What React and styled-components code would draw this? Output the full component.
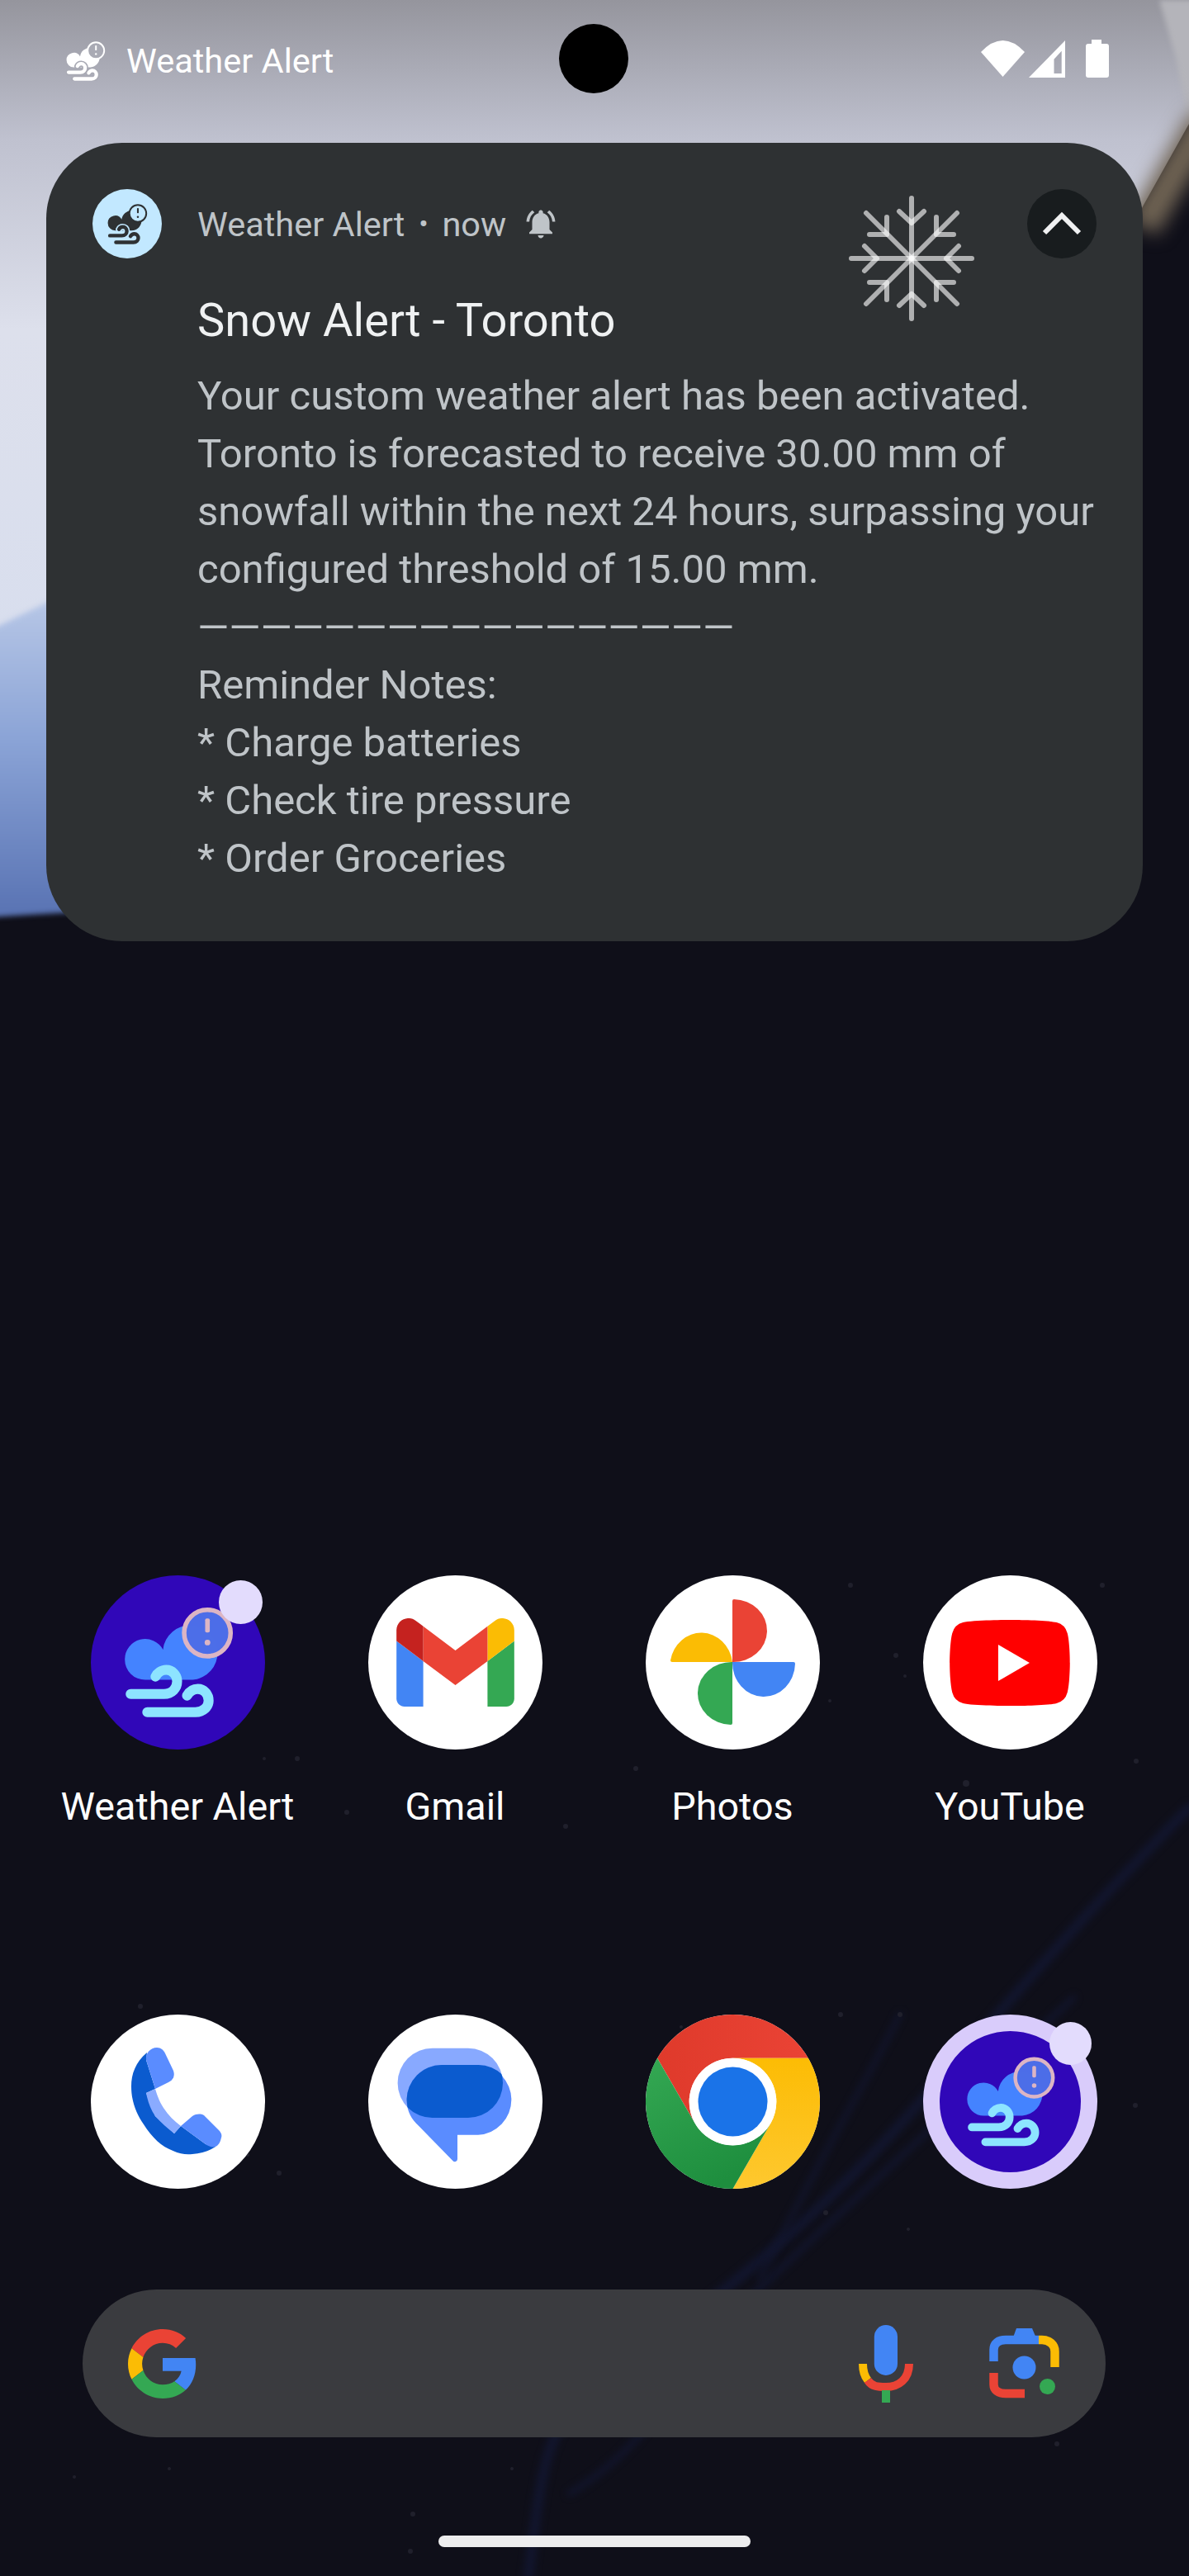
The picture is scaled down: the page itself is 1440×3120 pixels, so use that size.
import React from "react";
import styled, { createGlobalStyle } from "styled-components";

const GlobalStyle = createGlobalStyle`
  html, body {
    margin: 0;
    padding: 0;
    background: #0f0f19;
  }
  body {
    font-family: Roboto, "Noto Sans", sans-serif;
  }
`;

const BODY_LINES = [
  "Your custom weather alert has been activated.",
  "Toronto is forecasted to receive 30.00 mm of",
  "snowfall within the next 24 hours, surpassing your",
  "configured threshold of 15.00 mm.",
  "—————————————————",
  "Reminder Notes:",
  "* Charge batteries",
  "* Check tire pressure",
  "* Order Groceries",
];

const STARS = [
  [1030, 1920, 3], [1085, 2005, 3], [1096, 2030, 2], [1170, 2160, 4], [1376, 2133, 3], [1335, 1920, 3],
  [770, 2142, 3], [920, 2110, 2], [1005, 2060, 2], [360, 2130, 3], [420, 2195, 3], [685, 2212, 3],
  [320, 2130, 2], [170, 2430, 3], [1018, 2440, 3], [1090, 2440, 3], [1320, 2480, 3], [1375, 2550, 3],
  [338, 2632, 3], [300, 2610, 2], [560, 2560, 3], [825, 2455, 2], [1000, 2680, 3], [1100, 2700, 2],
  [1280, 2960, 3], [620, 2990, 2], [500, 3045, 3], [497, 3090, 3], [205, 2990, 2], [90, 3000, 2],
];

function Wallpaper() {
  return (
    <WallpaperArt viewBox="0 0 1440 3120" aria-hidden="true">
      <defs>
        <linearGradient id="sky" x1="0" y1="0" x2="0" y2="800" gradientUnits="userSpaceOnUse">
          <stop offset="0" stopColor="#95959d" />
          <stop offset="0.21" stopColor="#bfc1cf" />
          <stop offset="0.5" stopColor="#dde0ec" />
          <stop offset="1" stopColor="#d8deee" />
        </linearGradient>
        <linearGradient id="ridge" x1="0" y1="730" x2="0" y2="1105" gradientUnits="userSpaceOnUse">
          <stop offset="0" stopColor="#b6c6e6" />
          <stop offset="0.45" stopColor="#8aa3d6" />
          <stop offset="1" stopColor="#5a74b4" />
        </linearGradient>
        <filter id="soft" x="-50%" y="-50%" width="200%" height="200%" colorInterpolationFilters="sRGB">
          <feGaussianBlur stdDeviation="11" />
        </filter>
        <filter id="softer" x="-20%" y="-20%" width="140%" height="140%" colorInterpolationFilters="sRGB">
          <feGaussianBlur stdDeviation="3" />
        </filter>
        <filter id="haze" x="-20%" y="-20%" width="140%" height="140%" colorInterpolationFilters="sRGB">
          <feGaussianBlur stdDeviation="5" />
        </filter>
      </defs>
      <rect width="1440" height="3120" fill="#0f0f19" />
      <path d="M0 0H1440V150L1384 250L1300 420H200V900H0Z" fill="url(#sky)" />
      <path d="M-30 772L60 728L200 700V1098L-30 1112Z" fill="url(#ridge)" filter="url(#softer)" />
      <path d="M1404 0H1470V150H1440L1424 70Z" fill="#b4b4ba" filter="url(#softer)" />
      <path d="M1460 145L1384 275" fill="none" stroke="#6f6353" strokeWidth="40" filter="url(#soft)" />
      <g fill="none" stroke="#131836" strokeLinecap="round" opacity="0.75">
        <path d="M1440 2190C1340 2290 1260 2380 1120 2540S860 2790 760 2860S660 2960 640 3120" strokeWidth="12" filter="url(#haze)" />
        <path d="M1300 2420C1190 2520 1060 2640 890 2800C820 2880 790 2960 690 3020" strokeWidth="7" filter="url(#haze)" />
        <path d="M1090 2440C1050 2520 1000 2600 920 2760" strokeWidth="6" filter="url(#haze)" />
      </g>
      {STARS.map(([x, y, r]) => (
        <circle key={`${x}-${y}`} cx={x} cy={y} r={r} fill="#20202c" />
      ))}
    </WallpaperArt>
  );
}

function WeatherGlyph({ size, box = "0 0 210 210", cloud, wind, ring, ringFill = "none", halo }) {
  const windOne = "M48 143H88C98 143 104 136 104 128C104 120 98 114 91 114C85 114 80 118 78 122";
  const windTwo = "M68 165H126C136 165 142 158 142 151C142 143 136 137 129 137C123 137 119 140 116 145";
  return (
    <svg width={size} height={size} viewBox={box} aria-hidden="true">
      <path
        fill={cloud}
        d="M41 101a24.5 24.5 0 0 1 46-11.5A33 33 0 1 1 123 126H66a24.5 24.5 0 0 1-25-25Z"
      />
      <circle cx="140.5" cy="69.5" r="28" fill={halo || ringFill} stroke="none" />
      <circle cx="140.5" cy="69.5" r="28" fill={ringFill} stroke={ring} strokeWidth="5.5" />
      <rect x="137.8" y="52" width="5.6" height="17" rx="2" fill={ring} />
      <circle cx="140.6" cy="81" r="3.4" fill={ring} />
      <g fill="none" strokeLinecap="round" strokeLinejoin="round">
        {halo && <path d={windOne} stroke={halo} strokeWidth="21" />}
        {halo && <path d={windTwo} stroke={halo} strokeWidth="21" />}
        <path d={windOne} stroke={wind} strokeWidth="12" />
        <path d={windTwo} stroke={wind} strokeWidth="12" />
      </g>
    </svg>
  );
}

function WifiIcon() {
  return (
    <svg width="53" height="44" viewBox="0 0 53 44" aria-hidden="true">
      <path d="M0 14Q26.5 -14 53 14L26.5 44Z" fill="#fff" />
    </svg>
  );
}

function SignalIcon() {
  return (
    <svg width="44" height="45" viewBox="0 0 44 45" aria-hidden="true">
      <path d="M0 45L44 0V45ZM30.5 22.7V40H39.7V12.7Z" fill="#fff" fillRule="evenodd" />
    </svg>
  );
}

function BatteryIcon() {
  return (
    <svg width="28" height="46" viewBox="0 0 28 46" aria-hidden="true">
      <path d="M7 0H19V5H25A3 3 0 0 1 28 8V43A3 3 0 0 1 25 46H3A3 3 0 0 1 0 43V8A3 3 0 0 1 3 5H7Z" fill="#fff" />
    </svg>
  );
}

function BellIcon() {
  return (
    <svg width="42" height="42" viewBox="0 0 24 24" aria-hidden="true">
      <path
        fill="#bfc4c8"
        d="M7.58 4.08L6.15 2.65C3.75 4.48 2.17 7.3 2.03 10.5h2c.15-2.65 1.51-4.97 3.55-6.42zm12.39 6.42h2c-.15-3.2-1.73-6.02-4.12-7.85l-1.42 1.43c2.02 1.45 3.39 3.77 3.54 6.42zM18 11c0-3.07-1.64-5.64-4.5-6.32V4c0-.83-.67-1.5-1.5-1.5s-1.5.67-1.5 1.5v.68C7.63 5.36 6 7.92 6 11v5l-2 2v1h16v-1l-2-2v-5zm-6 11c.14 0 .27-.01.4-.04.65-.14 1.18-.58 1.44-1.18.1-.24.15-.5.15-.78h-4c.01 1.1.9 2 2.01 2z"
      />
    </svg>
  );
}

function Snowflake() {
  const strokes = [
    "M0 -73V73", "M-73 0H73", "M-55 -55L55 55", "M55 -55L-55 55",
    "M-15 -57L0 -43L15 -57", "M-15 57L0 43L15 57", "M-57 -15L-42 0L-57 15", "M57 -15L42 0L57 15",
    "M-30 -50V-29H-51", "M30 -50V-29H51", "M-30 50V29H-51", "M30 50V29H51",
  ];
  return (
    <svg width="160" height="160" viewBox="-80 -80 160 160" aria-hidden="true">
      <g fill="none" stroke="#fff" strokeOpacity="0.62" strokeWidth="6" strokeLinecap="round" strokeLinejoin="round">
        {strokes.map((d) => (
          <path key={d} d={d} />
        ))}
      </g>
    </svg>
  );
}

function GmailIcon() {
  return (
    <svg width="143" height="107" viewBox="52 42 88 66" aria-hidden="true">
      <path fill="#4285f4" d="M58 108h14V74L52 59v43c0 3.32 2.69 6 6 6" />
      <path fill="#34a853" d="M120 108h14c3.32 0 6-2.69 6-6V59l-20 15" />
      <path fill="#fbbc04" d="M120 48v26l20-15v-8c0-7.42-8.47-11.65-14.4-7.2" />
      <path fill="#ea4335" d="M72 74V48l24 18 24-18v26L96 92" />
      <path fill="#c5221f" d="M52 51v8l20 15V48l-5.6-4.2c-5.94-4.45-14.4-.22-14.4 7.2" />
    </svg>
  );
}

function PhotosIcon() {
  return (
    <svg width="211" height="211" viewBox="0 0 211 211" aria-hidden="true">
      <path fill="#ea4335" d="M105 31Q105 29 107 29A41 38 0 0 1 105 105Z" />
      <path fill="#fbbc04" d="M105 105H32Q30 105 30 103A38 41 0 0 1 105 105Z" />
      <path fill="#34a853" d="M105 105V179Q105 181 103 181A41 38 0 0 1 105 105Z" />
      <path fill="#4285f4" d="M105 105H179Q181 105 181 107A38 41 0 0 1 105 105Z" />
    </svg>
  );
}

function YouTubeIcon() {
  return (
    <svg width="146" height="104" viewBox="0 0 28 20" aria-hidden="true">
      <path
        fill="#ff0000"
        d="M27.4 3.1A3.5 3.5 0 0 0 24.9.6C22.7 0 14 0 14 0S5.3 0 3.1.6A3.5 3.5 0 0 0 .6 3.1C0 5.3 0 10 0 10s0 4.7.6 6.9a3.5 3.5 0 0 0 2.5 2.5C5.3 20 14 20 14 20s8.7 0 10.9-.6a3.5 3.5 0 0 0 2.5-2.5c.6-2.2.6-6.9.6-6.9s0-4.7-.6-6.9z"
      />
      <path fill="#fff" d="M11.3 5.75v8.5L18.6 10z" />
    </svg>
  );
}

function PhoneIcon() {
  return (
    <svg width="211" height="211" viewBox="0 0 211 211" aria-hidden="true">
      <path
        fill="#0b5bcf"
        d="M68 46C54 58 49 72 49 87C49 105 55 120 64 133C74 149 86 160 99.5 165C108 169 116 170 123 169C134 168 144 165 151 160L139 157L109 135L101 144L78 123L67 95L78 90L67 55Z"
      />
      <path
        fill="#5a8cff"
        d="M67 55C66 47 72 40 80 40C85 40 88 43 90 47L100 68C102 74 100 79 94 82L78 90Z"
      />
      <path fill="#8aabff" d="M67 95L78 90C81 100 84 107 88 113C94 122 101 129 109 135L101 144C93 138 85 131 78 123C72 114 69 105 67 95Z" />
      <path
        fill="#5a8cff"
        d="M109 135L123 123C128 120 133 120 137 122L155 140C158 143 159 146 158 149C157 154 155 158 151 160C147 161 143 160 139 157Z"
      />
    </svg>
  );
}

function MessagesIcon() {
  return (
    <svg width="211" height="211" viewBox="0 0 211 211" aria-hidden="true">
      <defs>
        <clipPath id="frontBubble">
          <rect x="46.6" y="61" width="129" height="85" rx="42.4" />
        </clipPath>
      </defs>
      <rect x="35.6" y="40.7" width="127.4" height="84.3" rx="42" fill="#88a9ff" />
      <path
        fill="#5a8cff"
        d="M88.6 61H133A42.4 42.4 0 0 1 133 145.7H108V175A3.2 3.2 0 0 1 102.3 177L58 131.7C50 123 46.6 114 46.6 103.4A42.4 42.4 0 0 1 88.6 61Z"
      />
      <rect x="35.6" y="40.7" width="127.4" height="84.3" rx="42" fill="#0b5bcf" clipPath="url(#frontBubble)" />
    </svg>
  );
}

function ChromeIcon() {
  return (
    <svg width="211" height="211" viewBox="0 0 211 211" aria-hidden="true">
      <defs>
        <linearGradient id="chromeRed" x1="0" y1="0" x2="1" y2="0">
          <stop offset="0" stopColor="#df3a2b" />
          <stop offset="1" stopColor="#ea4335" />
        </linearGradient>
        <linearGradient id="chromeGreen" x1="0" y1="0" x2="0.5" y2="1">
          <stop offset="0" stopColor="#34a853" />
          <stop offset="1" stopColor="#1e8e3e" />
        </linearGradient>
        <linearGradient id="chromeYellow" x1="0.5" y1="0" x2="0.5" y2="1">
          <stop offset="0" stopColor="#fcbc04" />
          <stop offset="1" stopColor="#fec82f" />
        </linearGradient>
      </defs>
      <path fill="url(#chromeRed)" d="M105.5 0A105.5 105.5 0 0 1 196.9 52.75H105.5A52.75 52.75 0 0 0 59.8 132L14.1 52.75A105.5 105.5 0 0 1 105.5 0Z" />
      <path fill="url(#chromeYellow)" d="M196.9 52.75A105.5 105.5 0 0 1 105.5 211L151.2 132A52.75 52.75 0 0 0 105.5 52.75Z" />
      <path fill="url(#chromeGreen)" d="M14.1 52.75A105.5 105.5 0 0 0 105.5 211L151.2 132A52.75 52.75 0 0 1 59.8 132Z" />
      <circle cx="105.5" cy="105.5" r="52.75" fill="#fff" />
      <circle cx="105.5" cy="105.5" r="42" fill="#1a73e8" />
    </svg>
  );
}

function GoogleG() {
  return (
    <svg width="84" height="84" viewBox="0 0 48 48" aria-hidden="true">
      <path fill="#EA4335" d="M24 9.5c3.54 0 6.71 1.22 9.21 3.6l6.85-6.85C35.9 2.38 30.47 0 24 0 14.62 0 6.51 5.38 2.56 13.22l7.98 6.19C12.43 13.72 17.74 9.5 24 9.5z" />
      <path fill="#4285F4" d="M46.98 24.55c0-1.57-.15-3.09-.38-4.55H24v9.02h12.94c-.58 2.96-2.26 5.48-4.78 7.18l7.73 6c4.51-4.18 7.09-10.36 7.09-17.65z" />
      <path fill="#FBBC05" d="M10.53 28.59c-.48-1.45-.76-2.99-.76-4.59s.27-3.14.76-4.59l-7.98-6.19C.92 16.46 0 20.12 0 24c0 3.88.92 7.54 2.56 10.78l7.97-6.19z" />
      <path fill="#34A853" d="M24 48c6.48 0 11.93-2.13 15.89-5.81l-7.73-6c-2.15 1.45-4.92 2.3-8.16 2.3-6.26 0-11.57-4.22-13.47-9.91l-7.98 6.19C6.51 42.62 14.62 48 24 48z" />
    </svg>
  );
}

function MicIcon() {
  return (
    <svg width="66" height="94" viewBox="0 0 66 94" aria-hidden="true">
      <rect x="18.8" y="0" width="28.2" height="61" rx="14.1" fill="#4285f4" />
      <path d="M5 47C5 55 7 62 11 67" fill="none" stroke="#fbbc04" strokeWidth="10" />
      <path d="M11 67C16 75 24 75 33 75C48 75 61 66 61 47" fill="none" stroke="#ea4335" strokeWidth="10" />
      <rect x="28" y="79" width="10" height="15" fill="#34a853" />
    </svg>
  );
}

function LensIcon() {
  return (
    <svg width="85" height="85" viewBox="0 0 85 85" aria-hidden="true">
      <g fill="none" strokeWidth="10.5">
        <path d="M5.5 40V26C5.5 18 11 14 20 14H60" stroke="#4285f4" />
        <path d="M60 14H64C73 14 79.5 20 79.5 28V47" stroke="#fbbc04" />
        <path d="M5.5 54V68C5.5 75 11 79 20 79H43" stroke="#ea4335" />
      </g>
      <path d="M33 0H52L60 19H26Z" fill="#4285f4" />
      <circle cx="42.5" cy="47.5" r="14" fill="#4285f4" />
      <circle cx="70.5" cy="70.5" r="9.5" fill="#34a853" />
    </svg>
  );
}

export default function App() {
  return (
    <>
      <GlobalStyle />
      <Screen>
        <Wallpaper />
        <Foreground>
          <StatusBar>
            <StatusLeft>
              <WeatherGlyph size={48} box="41 38 131 134" cloud="#fff" wind="#fff" ring="#fff" halo="#a9aab4" />
              <StatusText>Weather Alert</StatusText>
            </StatusLeft>
            <Camera />
            <StatusRight>
              <WifiIcon />
              <SignalIcon />
              <BatteryWrap>
                <BatteryIcon />
              </BatteryWrap>
            </StatusRight>
          </StatusBar>

          <NotificationCard>
            <AppBadge>
              <WeatherGlyph size={49} box="41 38 131 134" cloud="#2e3133" wind="#2e3133" ring="#2e3133" halo="#c2e8ff" />
            </AppBadge>
            <NotificationMain>
              <NotificationHeader>
                <HeaderText>Weather Alert</HeaderText>
                <HeaderDot>•</HeaderDot>
                <HeaderText>now</HeaderText>
                <BellWrap>
                  <BellIcon />
                </BellWrap>
                <LargeIcon>
                  <Snowflake />
                </LargeIcon>
                <ExpandButton>
                  <svg width="54" height="34" viewBox="0 0 54 34" aria-hidden="true">
                    <path d="M6 28L27 7L48 28" fill="none" stroke="#f0f1f2" strokeWidth="6" />
                  </svg>
                </ExpandButton>
              </NotificationHeader>
              <NotificationTitle>Snow Alert - Toronto</NotificationTitle>
              <NotificationBody>
                {BODY_LINES.map((line) => (
                  <BodyLine key={line}>{line}</BodyLine>
                ))}
              </NotificationBody>
            </NotificationMain>
          </NotificationCard>

          <AppGrid>
            <AppTile>
              <AppIcon $bg="#3007b8">
                <WeatherGlyph size={211} cloud="#4483ff" wind="#8de4ff" ring="#dcb5c4" ringFill="rgba(76,110,232,0.9)" />
                <NotifDot />
              </AppIcon>
              <AppLabel>Weather Alert</AppLabel>
            </AppTile>
            <AppTile>
              <AppIcon>
                <GmailIcon />
              </AppIcon>
              <AppLabel>Gmail</AppLabel>
            </AppTile>
            <AppTile>
              <AppIcon>
                <PhotosIcon />
              </AppIcon>
              <AppLabel>Photos</AppLabel>
            </AppTile>
            <AppTile>
              <AppIcon>
                <YouTubeIcon />
              </AppIcon>
              <AppLabel>YouTube</AppLabel>
            </AppTile>
          </AppGrid>

          <DockGrid>
            <AppIcon>
              <PhoneIcon />
            </AppIcon>
            <AppIcon>
              <MessagesIcon />
            </AppIcon>
            <AppIcon>
              <ChromeIcon />
            </AppIcon>
            <AppIcon $bg="#3007b8" $ring>
              <WeatherGlyph size={171} cloud="#4483ff" wind="#8de4ff" ring="#dcb5c4" ringFill="rgba(76,110,232,0.9)" />
              <NotifDot $dock />
            </AppIcon>
          </DockGrid>

          <SearchBar>
            <GoogleG />
            <SearchActions>
              <MicIcon />
              <LensIcon />
            </SearchActions>
          </SearchBar>

          <HomeHandle />
        </Foreground>
      </Screen>
    </>
  );
}

const Screen = styled.div`
  position: relative;
  width: 1440px;
  height: 3120px;
  overflow: hidden;
  background: #0f0f19;
`;

const WallpaperArt = styled.svg`
  position: absolute;
  inset: 0;
  width: 1440px;
  height: 3120px;
`;

const Foreground = styled.div`
  position: relative;
  display: flex;
  flex-direction: column;
`;

const StatusBar = styled.div`
  display: grid;
  grid-template-columns: 597px 84px 1fr;
  align-items: center;
  height: 84px;
  padding: 29px 97px 0 80px;
`;

const StatusLeft = styled.div`
  display: flex;
  align-items: center;
  gap: 25px;
  margin-top: 5px;
`;

const StatusText = styled.span`
  font-size: 41.5px;
  line-height: 48px;
  color: #fff;
`;

const Camera = styled.div`
  width: 84px;
  height: 84px;
  border-radius: 50%;
  background: #000;
`;

const StatusRight = styled.div`
  display: flex;
  align-items: center;
  justify-content: flex-end;
  gap: 5px;
`;

const BatteryWrap = styled.div`
  display: flex;
  margin-left: 20px;
`;

const NotificationCard = styled.div`
  display: grid;
  grid-template-columns: 84px 1fr;
  column-gap: 43px;
  width: 1328px;
  height: 967px;
  box-sizing: border-box;
  margin: 60px 0 0 56px;
  padding: 56px 56px 0;
  border-radius: 92px;
  background: #2e3133;
`;

const AppBadge = styled.div`
  display: flex;
  align-items: center;
  justify-content: center;
  width: 84px;
  height: 84px;
  border-radius: 50%;
  background: #c2e8ff;
`;

const NotificationMain = styled.div`
  display: flex;
  flex-direction: column;
  min-width: 0;
`;

const NotificationHeader = styled.div`
  display: flex;
  align-items: center;
  height: 84px;
`;

const HeaderText = styled.span`
  padding-top: 2px;
  font-size: 41.5px;
  line-height: 48px;
  color: #bfc4c8;
`;

const HeaderDot = styled.span`
  width: 45px;
  font-size: 34px;
  line-height: 48px;
  text-align: center;
  color: #bfc4c8;
`;

const BellWrap = styled.span`
  display: flex;
  margin-left: 21px;
`;

const LargeIcon = styled.div`
  display: flex;
  align-self: flex-start;
  height: 160px;
  margin: 4px 60px -80px auto;
`;

const ExpandButton = styled.div`
  display: flex;
  align-items: center;
  justify-content: center;
  flex: none;
  width: 84px;
  height: 84px;
  border-radius: 50%;
  background: #181c1e;
`;

const NotificationTitle = styled.div`
  margin-top: 42px;
  font-size: 56px;
  line-height: 66px;
  color: #eff1f2;
`;

const NotificationBody = styled.div`
  margin-top: 24px;
`;

const BodyLine = styled.div`
  height: 70px;
  font-size: 49px;
  line-height: 70px;
  color: #bfc4c8;
  white-space: nowrap;
`;

const AppGrid = styled.div`
  display: grid;
  grid-template-columns: repeat(4, 336px);
  margin: 768px 0 0 47px;
`;

const AppTile = styled.div`
  display: flex;
  flex-direction: column;
  align-items: center;
`;

const AppIcon = styled.div`
  position: relative;
  display: flex;
  align-items: center;
  justify-content: center;
  width: 211px;
  height: 211px;
  box-sizing: border-box;
  border-radius: 50%;
  background: ${(p) => p.$bg || "#fff"};
  ${(p) => p.$ring && "border: 20px solid #d9ccfb;"}
`;

const NotifDot = styled.div`
  position: absolute;
  top: ${(p) => (p.$dock ? "-11px" : "6px")};
  right: ${(p) => (p.$dock ? "-13px" : "3px")};
  width: ${(p) => (p.$dock ? "51px" : "53px")};
  height: ${(p) => (p.$dock ? "52px" : "53px")};
  border-radius: 50%;
  background: #e3dcfd;
`;

const AppLabel = styled.div`
  margin-top: 42px;
  font-size: 46.7px;
  line-height: 54px;
  color: #fff;
  white-space: nowrap;
`;

const DockGrid = styled.div`
  display: grid;
  grid-template-columns: repeat(4, 336px);
  justify-items: center;
  margin: 225px 0 0 47px;
`;

const SearchBar = styled.div`
  display: flex;
  align-items: center;
  justify-content: space-between;
  width: 1239px;
  height: 179px;
  box-sizing: border-box;
  margin: 122px 0 0 100px;
  padding: 0 56px 0 55px;
  border-radius: 90px;
  background: #3a3b3f;
`;

const SearchActions = styled.div`
  display: flex;
  align-items: center;
  gap: 92px;
`;

const HomeHandle = styled.div`
  align-self: center;
  width: 378px;
  height: 14px;
  margin-top: 119px;
  border-radius: 7px;
  background: #ededee;
`;
